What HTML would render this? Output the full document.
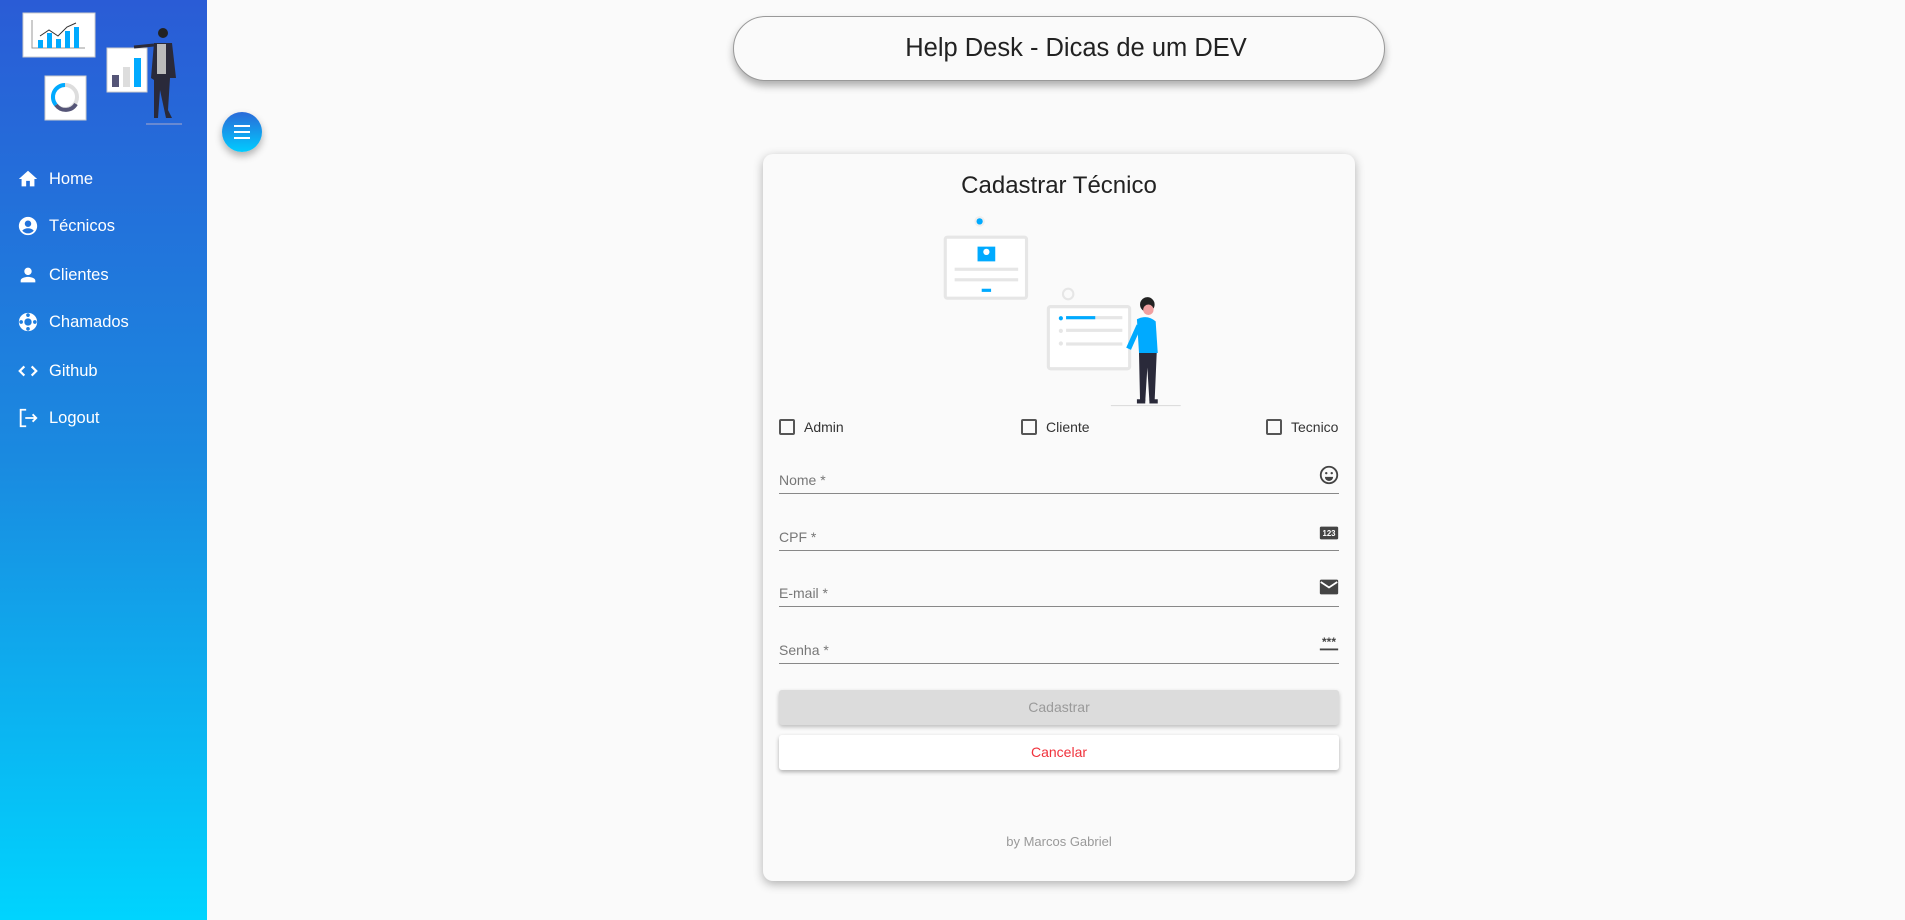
<!DOCTYPE html>
<html><head><meta charset="utf-8"><style>
*{box-sizing:border-box;margin:0;padding:0}
body{width:1905px;height:920px;background:#fafafa;font-family:"Liberation Sans",sans-serif;position:relative;overflow:hidden}
.side{position:absolute;left:0;top:0;width:207px;height:920px;background:linear-gradient(180deg,#2a5cd6 0%,#1a8ae0 50%,#00d4fe 100%)}
.nav{position:absolute;left:17px;color:#fff;font-size:16.5px;display:flex;align-items:center}
.nav svg{width:22px;height:22px;margin-right:10px}
.fab{position:absolute;left:222px;top:112px;width:40px;height:40px;border-radius:50%;background:linear-gradient(180deg,#2a6ad8,#00ccff);box-shadow:0 4px 8px rgba(0,0,0,.3)}
.fab i{position:absolute;left:12px;width:16px;height:2px;background:#fff}
.pill{position:absolute;left:733px;top:16px;width:652px;height:65px;border:1px solid #999;border-radius:33px;background:#fafafa;box-shadow:0 5px 8px rgba(0,0,0,.3);text-align:center;line-height:63px;font-size:25.5px;color:#222;padding-left:34px}
.card{position:absolute;left:763px;top:154px;width:592px;height:727px;border-radius:10px;background:#fafafa;box-shadow:0 3px 10px rgba(0,0,0,.3)}
.t{position:absolute;width:100%;text-align:center;top:18px;font-size:24px;color:#222}
.cb{position:absolute;top:265px;display:flex;align-items:center;font-size:14px;color:#333}
.cb i{width:16px;height:16px;border:2px solid #555;border-radius:2px;margin-right:9px}
.f{position:absolute;left:16px;width:560px;height:1px;background:#888}
.lbl{position:absolute;left:16px;font-size:14px;color:#777}
.ic{position:absolute;left:555px}
.btn{position:absolute;left:16px;width:560px;height:35px;border-radius:3px;text-align:center;line-height:35px;font-size:14px}
</style></head><body>
<div class="side">
<svg width="207" height="130" style="position:absolute;left:0;top:0">
<rect x="23" y="13" width="72" height="44" fill="#fff" stroke="#ccc"/>
<polyline points="32,20 32,48 85,48" fill="none" stroke="#999"/>
<rect x="38" y="40" width="5" height="8" fill="#00aaff"/><rect x="47" y="33" width="5" height="15" fill="#00aaff"/><rect x="56" y="39" width="5" height="9" fill="#00aaff"/><rect x="65" y="31" width="5" height="17" fill="#00aaff"/><rect x="74" y="27" width="5" height="21" fill="#00aaff"/>
<polyline points="40,36 49,30 58,36 67,27 76,23" fill="none" stroke="#333" stroke-width="1"/>
<rect x="45" y="76" width="41" height="44" fill="#fff" stroke="#ccc"/>
<circle cx="65" cy="97" r="12" fill="none" stroke="#ddd" stroke-width="4"/>
<path d="M56 105 A12 12 0 0 1 65 85" fill="none" stroke="#00aaff" stroke-width="4"/>
<path d="M56 105 A12 12 0 0 0 76 104" fill="none" stroke="#555577" stroke-width="4"/>
<rect x="107" y="48" width="40" height="44" fill="#fff" stroke="#ccc"/>
<rect x="112" y="75" width="7" height="12" fill="#555577"/><rect x="123" y="67" width="7" height="20" fill="#ddd"/><rect x="134" y="58" width="7" height="29" fill="#00aaff"/>
<circle cx="163" cy="33" r="5" fill="#222"/>
<path d="M154 43 L172 43 L176 78 L170 78 L168 110 L172 118 L166 118 L160 90 L158 118 L154 118 L154 80 L151 78 Z" fill="#2a2a3a"/>
<rect x="157" y="44" width="9" height="30" fill="#bbb"/>
<line x1="134" y1="47" x2="154" y2="45" stroke="#2a2a3a" stroke-width="3"/>
<line x1="146" y1="124" x2="182" y2="124" stroke="#aac" stroke-width="1"/>
</svg>
<div class="nav" style="top:168px"><svg viewBox="0 0 24 24"><path fill="#fff" d="M10 20v-6h4v6h5v-8h3L12 3 2 12h3v8z"/></svg>Home</div>
<div class="nav" style="top:215px"><svg viewBox="0 0 24 24"><path fill="#fff" d="M12 2C6.5 2 2 6.5 2 12s4.5 10 10 10 10-4.5 10-10S17.5 2 12 2zm0 4c1.9 0 3.5 1.6 3.5 3.5S13.9 13 12 13s-3.5-1.6-3.5-3.5S10.1 6 12 6zm0 14c-2.5 0-4.8-1.1-6.3-3 1.5-1.5 3.8-2.5 6.3-2.5s4.8 1 6.3 2.5c-1.5 1.9-3.8 3-6.3 3z"/></svg>Técnicos</div>
<div class="nav" style="top:264px"><svg viewBox="0 0 24 24"><path fill="#fff" d="M12 12c2.2 0 4-1.8 4-4s-1.8-4-4-4-4 1.8-4 4 1.8 4 4 4zm0 2c-2.7 0-8 1.3-8 4v2h16v-2c0-2.7-5.3-4-8-4z"/></svg>Clientes</div>
<div class="nav" style="top:311px"><svg viewBox="0 0 24 24"><path fill="#fff" fill-rule="evenodd" d="M12 2a10 10 0 1 0 0 20 10 10 0 0 0 0-20zm0 6a4 4 0 1 0 0 8 4 4 0 0 0 0-8z"/><circle cx="12" cy="4.5" r="2" fill="#1d7ee0"/><circle cx="12" cy="19.5" r="2" fill="#1d7ee0"/><circle cx="4.5" cy="12" r="2" fill="#1d7ee0"/><circle cx="19.5" cy="12" r="2" fill="#1d7ee0"/></svg>Chamados</div>
<div class="nav" style="top:360px"><svg viewBox="0 0 24 24"><path fill="none" stroke="#fff" stroke-width="2.4" d="M8 7l-5 5 5 5M16 7l5 5-5 5"/></svg>Github</div>
<div class="nav" style="top:407px"><svg viewBox="0 0 24 24"><path fill="none" stroke="#fff" stroke-width="2" d="M10 3H4v18h6M9 12h12M17 8l4 4-4 4"/></svg>Logout</div>
</div>
<div class="fab"><i style="top:13px"></i><i style="top:19px"></i><i style="top:25px"></i></div>
<div class="pill">Help Desk - Dicas de um DEV</div>
<div class="card">
<svg width="250" height="200" style="position:absolute;left:176px;top:60px" viewBox="0 0 240 190" preserveAspectRatio="none">
<circle cx="39" cy="7" r="5" fill="#eee"/><circle cx="39" cy="7" r="3" fill="#00aaff"/>
<rect x="6" y="22" width="78" height="58" rx="2" fill="#fff" stroke="#e6e6e6" stroke-width="3"/>
<rect x="37" y="31" width="17" height="14" fill="#00aaff"/><circle cx="45.5" cy="36" r="3" fill="#fff"/>
<rect x="15" y="51" width="61" height="3" fill="#e6e6e6"/><rect x="15" y="61" width="61" height="3" fill="#e6e6e6"/><rect x="41" y="71" width="9" height="3" fill="#00aaff"/>
<circle cx="124" cy="76" r="5" fill="none" stroke="#e6e6e6" stroke-width="2"/>
<rect x="105" y="88" width="78" height="59" rx="2" fill="#fff" stroke="#e6e6e6" stroke-width="3"/>
<rect x="122" y="97" width="54" height="3" fill="#e6e6e6"/><rect x="122" y="97" width="28" height="3" fill="#00aaff"/><circle cx="117" cy="99" r="2" fill="#00aaff"/>
<rect x="122" y="109" width="54" height="3" fill="#e6e6e6"/><circle cx="117" cy="111" r="2" fill="#e6e6e6"/>
<rect x="122" y="122" width="54" height="3" fill="#e6e6e6"/><circle cx="117" cy="123" r="2" fill="#e6e6e6"/>
<circle cx="200" cy="86" r="7" fill="#222"/><circle cx="201" cy="91" r="5" fill="#f0a0a0"/>
<path d="M190 100 Q200 95 208 102 L210 132 L192 132 Z" fill="#00aaff"/>
<path d="M192 106 L182 128" stroke="#00aaff" stroke-width="5"/>
<path d="M192 132 L209 132 L207 178 L202 178 L200 146 L198 178 L193 178 Z" fill="#2a2a3a"/>
<rect x="190" y="176" width="8" height="4" fill="#2a2a3a"/><rect x="202" y="176" width="8" height="4" fill="#2a2a3a"/>
<line x1="165" y1="182" x2="232" y2="182" stroke="#ddd"/>
</svg>
<div class="t">Cadastrar Técnico</div>
<div class="cb" style="left:16px"><i></i>Admin</div>
<div class="cb" style="left:258px"><i></i>Cliente</div>
<div class="cb" style="left:503px"><i></i>Tecnico</div>
<div class="lbl" style="top:318px">Nome *</div><div class="f" style="top:339px"></div>
<div class="lbl" style="top:375px">CPF *</div><div class="f" style="top:396px"></div>
<div class="lbl" style="top:431px">E-mail *</div><div class="f" style="top:452px"></div>
<div class="lbl" style="top:488px">Senha *</div><div class="f" style="top:509px"></div>
<svg class="ic" style="top:310px" width="22" height="22" viewBox="0 0 24 24"><circle cx="12" cy="12" r="9" fill="none" stroke="#444" stroke-width="2"/><circle cx="9" cy="10" r="1.3" fill="#444"/><circle cx="15" cy="10" r="1.3" fill="#444"/><path d="M7.5 14h9a4.5 4.5 0 0 1-9 0z" fill="#444"/></svg>
<svg class="ic" style="top:368px" width="22" height="22" viewBox="0 0 24 24"><rect x="2" y="5" width="20" height="14" rx="1.5" fill="#444"/><text x="12" y="15.5" font-size="8.5" fill="#fff" text-anchor="middle" font-family="Liberation Sans" font-weight="bold">123</text></svg>
<svg class="ic" style="top:422px" width="22" height="22" viewBox="0 0 24 24"><rect x="2" y="4" width="20" height="16" rx="1.5" fill="#444"/><path d="M3 6.5l9 6 9-6" fill="none" stroke="#fff" stroke-width="2"/></svg>
<svg class="ic" style="top:478px" width="22" height="22" viewBox="0 0 24 24"><text x="12" y="15" font-size="13" fill="#444" text-anchor="middle" font-family="Liberation Sans" font-weight="bold">***</text><rect x="2" y="18" width="20" height="2" fill="#444"/></svg>
<div class="btn" style="top:536px;background:#dcdcdc;color:#9a9a9a;box-shadow:0 2px 4px rgba(0,0,0,.25)">Cadastrar</div>
<div class="btn" style="top:581px;background:#fff;color:#f0323c;box-shadow:0 2px 4px rgba(0,0,0,.3)">Cancelar</div>
<div style="position:absolute;top:680px;width:100%;text-align:center;font-size:13px;color:#999">by Marcos Gabriel</div>
</div>
</body></html>
